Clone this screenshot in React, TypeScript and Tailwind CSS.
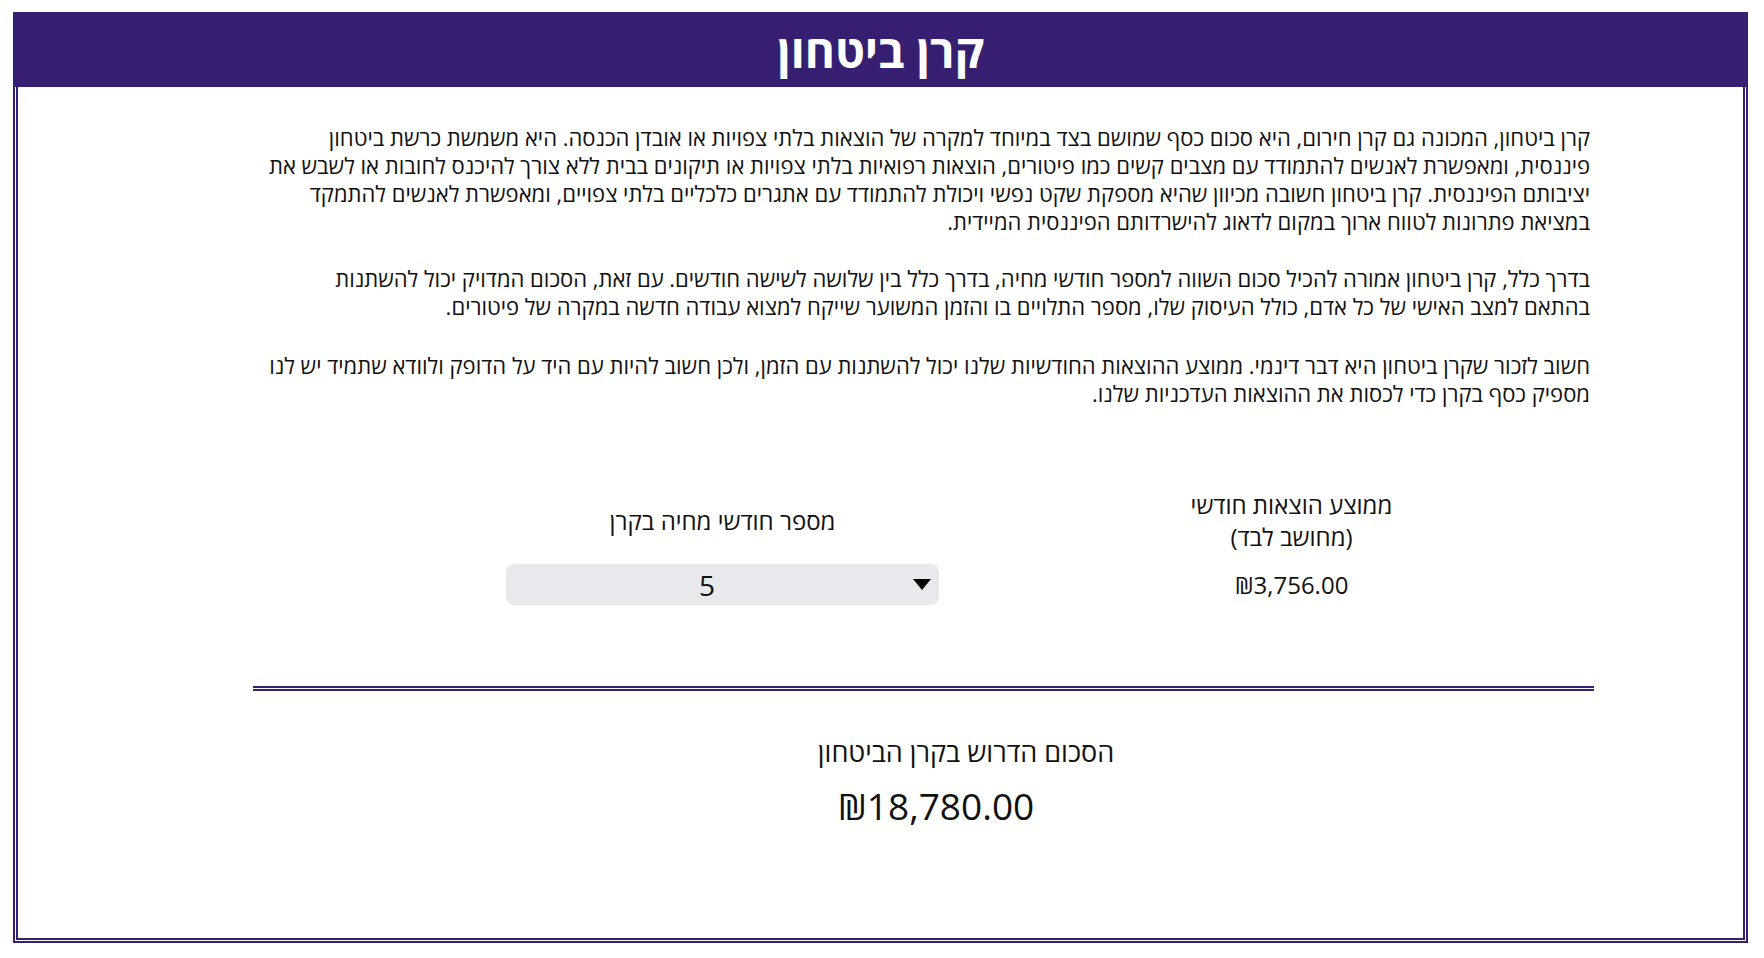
import React from "react";

export default function App() {
  const font = { fontFamily: '"Open Sans", "Noto Sans", "DejaVu Sans", sans-serif' };
  return (
    <div dir="rtl" className="w-[1764px] h-[958px] bg-white overflow-hidden" style={font}>
      <div className="pt-[12px] pl-[13px] pr-[16px]">
        <div className="h-[75px] bg-[#361e70] flex items-center justify-center">
          <h1 className="text-white font-bold text-[46px] leading-none">קרן ביטחון</h1>
        </div>
        <div className="h-[856px] border-[5px] border-t-0 border-double border-[#361e70] flex flex-col">
          <div className="pt-[36px] pr-[153px] pl-[227px] text-[22px] leading-[28px] text-[#111] text-right">
            <p>
              <span className="block whitespace-nowrap">קרן ביטחון, המכונה גם קרן חירום, היא סכום כסף שמושם בצד במיוחד למקרה של הוצאות בלתי צפויות או אובדן הכנסה. היא משמשת כרשת ביטחון</span>
              <span className="block whitespace-nowrap">פיננסית, ומאפשרת לאנשים להתמודד עם מצבים קשים כמו פיטורים, הוצאות רפואיות בלתי צפויות או תיקונים בבית ללא צורך להיכנס לחובות או לשבש את</span>
              <span className="block whitespace-nowrap">יציבותם הפיננסית. קרן ביטחון חשובה מכיוון שהיא מספקת שקט נפשי ויכולת להתמודד עם אתגרים כלכליים בלתי צפויים, ומאפשרת לאנשים להתמקד</span>
              <span className="block whitespace-nowrap">במציאת פתרונות לטווח ארוך במקום לדאוג להישרדותם הפיננסית המיידית.</span>
            </p>
            <p className="mt-[29px]">
              <span className="block whitespace-nowrap">בדרך כלל, קרן ביטחון אמורה להכיל סכום השווה למספר חודשי מחיה, בדרך כלל בין שלושה לשישה חודשים. עם זאת, הסכום המדויק יכול להשתנות</span>
              <span className="block whitespace-nowrap">בהתאם למצב האישי של כל אדם, כולל העיסוק שלו, מספר התלויים בו והזמן המשוער שייקח למצוא עבודה חדשה במקרה של פיטורים.</span>
            </p>
            <p className="mt-[31px]">
              <span className="block whitespace-nowrap">חשוב לזכור שקרן ביטחון היא דבר דינמי. ממוצע ההוצאות החודשיות שלנו יכול להשתנות עם הזמן, ולכן חשוב להיות עם היד על הדופק ולוודא שתמיד יש לנו</span>
              <span className="block whitespace-nowrap">מספיק כסף בקרן כדי לכסות את ההוצאות העדכניות שלנו.</span>
            </p>
          </div>

          <div className="mt-[82px] pr-[167px] flex">
            <div className="grid grid-cols-[569px_569px] grid-rows-[64px_auto] gap-y-[11px] text-[#111]">
              <div className="flex flex-col items-center justify-center text-[24px] leading-[32px]">
                <span>ממוצע הוצאות חודשי</span>
                <span>(מחושב לבד)</span>
              </div>
              <div className="flex items-center justify-center text-[24px] leading-[32px]">
                <span>מספר חודשי מחיה בקרן</span>
              </div>
              <div className="flex items-center justify-center text-[24px] leading-[32px]">
                <span>₪3,756.00</span>
              </div>
              <div className="flex items-center justify-center">
                <div dir="ltr" className="relative w-[433px] h-[41px] rounded-[8px] bg-[#e8e9ec] flex items-center justify-center pr-[31px]">
                  <span className="text-[28px] leading-none text-[#111]">5</span>
                  <svg className="absolute right-[8px] top-[15px]" width="18" height="11" viewBox="0 0 18 11">
                    <polygon points="0,0 18,0 9,11" fill="#000" />
                  </svg>
                </div>
              </div>
            </div>
          </div>

          <div className="mt-[81px] mr-[149px] ml-[235px] border-t-[5px] border-double border-[#361e70]" />

          <div className="mr-[149px] ml-[235px] flex flex-col items-center text-[#111]">
            <div className="mt-[43px] pl-[85px] text-[27px] leading-[36px]">הסכום הדרוש בקרן הביטחון</div>
            <div className="mt-[14px] pl-[25px] text-[37px] leading-[44px]">₪18,780.00</div>
          </div>
        </div>
      </div>
    </div>
  );
}
